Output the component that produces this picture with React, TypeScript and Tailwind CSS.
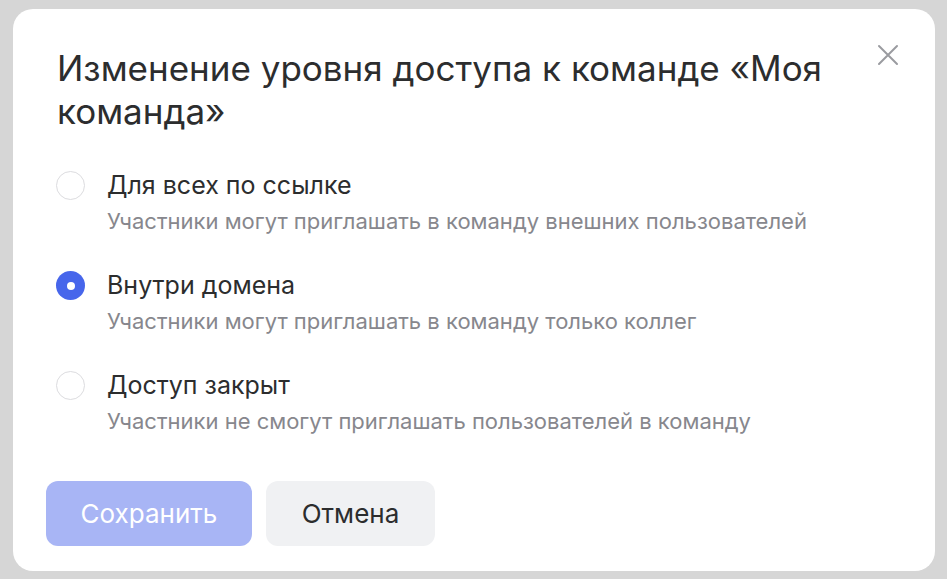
import React from "react";

const options = [
  { title: "Для всех по ссылке", desc: "Участники могут приглашать в команду внешних пользователей", checked: false },
  { title: "Внутри домена", desc: "Участники могут приглашать в команду только коллег", checked: true },
  { title: "Доступ закрыт", desc: "Участники не смогут приглашать пользователей в команду", checked: false },
];

export default function App() {
  return (
    <div className="w-[947px] h-[579px] bg-[#d6d6d6] pt-[9px] pl-[13px]" style={{ fontFamily: "Inter, 'Liberation Sans', Arial, sans-serif" }}>
      <div className="relative w-[922px] h-[562px] bg-white rounded-[20px] pl-[33px] pt-[38px]">
        <button className="absolute right-[35px] top-[34px] w-[24px] h-[24px] flex items-center justify-center">
          <svg width="24" height="24" viewBox="0 0 24 24" fill="none" stroke="#9a9ba0" strokeWidth="2" strokeLinecap="round">
            <path d="M3 3 L21 21 M21 3 L3 21" />
          </svg>
        </button>
        <h1 className="pl-[11px] pr-[80px] text-[35px] leading-[43px] text-[#2c2d2e] font-normal">
          Изменение уровня доступа к команде «Моя команда»
        </h1>
        <div className="mt-[34px] flex flex-col gap-[28px] pl-[10px]">
          {options.map((o) => (
            <div key={o.title} className="flex gap-[22px]">
              <div className="pt-[4px]">
                {o.checked ? (
                  <div className="w-[29px] h-[29px] rounded-full bg-[#4766eb] flex items-center justify-center">
                    <div className="w-[8px] h-[8px] rounded-full bg-white" />
                  </div>
                ) : (
                  <div className="w-[29px] h-[29px] rounded-full border border-[#dcdcdf] bg-white" />
                )}
              </div>
              <div>
                <div className="text-[25px] leading-[36px] text-[#2c2d2e]">{o.title}</div>
                <div className="text-[22px] leading-[36px] text-[#87878d]">{o.desc}</div>
              </div>
            </div>
          ))}
        </div>
        <div className="mt-[42px] flex gap-[14px]">
          <button className="w-[206px] h-[65px] rounded-[12px] bg-[#a8b5f5] text-white text-[26px]">Сохранить</button>
          <button className="w-[169px] h-[65px] rounded-[12px] bg-[#f0f1f3] text-[#2c2d2e] text-[26px]">Отмена</button>
        </div>
      </div>
    </div>
  );
}
